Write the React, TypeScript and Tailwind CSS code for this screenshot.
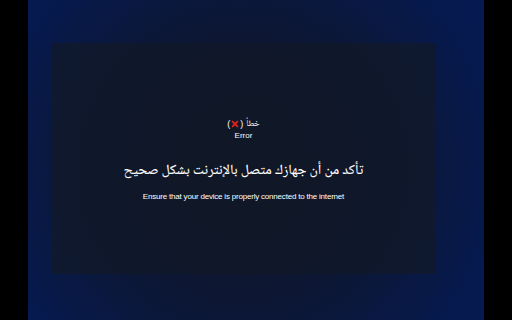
export default function App() {
  return (
    <div className="flex h-[320px] w-[512px] bg-black">
      <div className="ml-[28px] h-full w-[456px] bg-[radial-gradient(circle_at_215px_168px,#0e1424_0px,#0f1628_50px,#0c1736_150px,#061a50_260px,#051a52_400px)] pl-[23px] pt-[43px]">
        <div className="flex h-[231px] w-[385px] flex-col items-center bg-[#111827]/70 pt-[75px] font-['Liberation_Sans',sans-serif] text-white">
          <div dir="rtl" className="flex items-center gap-[3px] text-[9px] leading-[12px]">
            <span className="font-['Noto_Naskh_Arabic',serif]">خطأ</span>
            <span className="flex items-center">
              (
              <svg viewBox="0 0 10 10" className="mx-[1px] h-[8px] w-[8px]">
                <path d="M2 2 L8 8 M8 2 L2 8" stroke="#e0201b" strokeWidth="2.4" strokeLinecap="round" />
              </svg>
              )
            </span>
          </div>
          <div className="text-[8px] leading-[11px]">Error</div>
          <div dir="rtl" className="mt-[15px] whitespace-nowrap font-['Noto_Naskh_Arabic',serif] text-[14px] font-medium leading-[30px]">
            تأكد من أن جهازك متصل بالإنترنت بشكل صحيح
          </div>
          <div className="mt-[6px] text-[8px] leading-[10px] tracking-[-0.2px]">
            Ensure that your device is properly connected to the internet
          </div>
        </div>
      </div>
    </div>
  )
}
